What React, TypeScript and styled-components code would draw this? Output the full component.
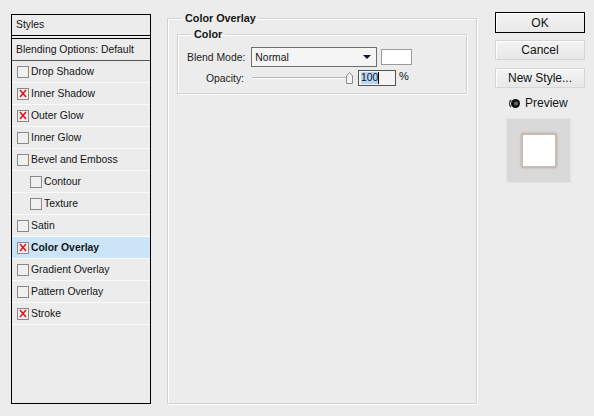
import React from 'react'
import styled, { createGlobalStyle, css } from 'styled-components'

const Global = createGlobalStyle`
  html, body {
    margin: 0;
    padding: 0;
    background: #ececec;
  }
  body {
    font-family: 'Liberation Sans', Arial, sans-serif;
    font-size: 10.4px;
    color: #141414;
  }
`

const Dialog = styled.div`
  display: flex;
  align-items: flex-start;
  width: 594px;
  height: 416px;
  box-sizing: border-box;
  padding: 14px 0 0 11px;
`

const StylesPanel = styled.aside`
  width: 140px;
  height: 390px;
  box-sizing: border-box;
  border: 1px solid #000;
  display: flex;
  flex-direction: column;
`

const PanelHeader = styled.div`
  height: 20px;
  line-height: 20px;
  padding-left: 4px;
  border-bottom: 1px solid #000;
  margin-bottom: 2px;
`

const BlendingRow = styled.div`
  height: 21px;
  line-height: 21px;
  padding-left: 4px;
  border-top: 1px solid #000;
  border-bottom: 1px solid #555;
`

const EffectRow = styled.div<{ $indent?: boolean; $active?: boolean }>(
  props => css`
    display: flex;
    align-items: center;
    gap: 2px;
    height: 21px;
    border-bottom: 1px solid #fafafa;
    padding-left: ${props.$indent ? 18 : 5}px;
    background: ${props.$active ? '#cce4f7' : 'transparent'};
    font-weight: ${props.$active ? 'bold' : 'normal'};
  `
)

const Box = styled.span`
  width: 10px;
  height: 10px;
  border: 1px solid #8a8a8a;
  background: #f0f0f0;
  display: flex;
  align-items: center;
  justify-content: center;
`

const Middle = styled.div`
  margin-left: 16px;
  margin-top: -3px;
`

const Group = styled.fieldset<{ $w: number; $h: number; $top?: number }>(
  props => css`
    width: ${props.$w}px;
    height: ${props.$h}px;
    box-sizing: border-box;
    margin: ${props.$top ?? 0}px 0 0;
    padding: 0 9px;
    border: 1px solid #d2d2d2;
    box-shadow: inset 1px 1px 0 #fff, 1px 1px 0 #fff;
  `
)

const Legend = styled.legend<{ $left: number }>(
  props => css`
    font-weight: bold;
    font-size: 10.8px;
    padding: 0 3px;
    margin-left: ${props.$left}px;
    line-height: 14px;
  `
)

const Inner = styled.div`
  margin-top: 6px;
`

const FieldRow = styled.div<{ $h: number }>(
  props => css`
    display: flex;
    align-items: center;
    height: ${props.$h}px;
  `
)

const Label = styled.span<{ $w: number }>(
  props => css`
    flex: 0 0 ${props.$w}px;
    white-space: nowrap;
    text-align: right;
    color: #222;
  `
)

const Select = styled.div`
  width: 126px;
  height: 20px;
  box-sizing: border-box;
  margin-left: 6px;
  border: 1px solid #6e6e6e;
  background: #f5f5f5;
  display: flex;
  align-items: center;
  justify-content: space-between;
  padding: 0 5px 0 3px;
`

const Swatch = styled.div`
  width: 31px;
  height: 16px;
  box-sizing: border-box;
  margin-left: 4px;
  border: 1px solid #9a9a9a;
  background: #fff;
`

const Slider = styled.div`
  width: 100px;
  height: 14px;
  margin-left: 8px;
  display: flex;
  align-items: center;
  justify-content: flex-end;
  position: relative;
`

const Track = styled.div`
  position: absolute;
  left: 0;
  right: 2px;
  top: 6px;
  height: 1px;
  background: #b8b8b8;
  border-bottom: 1px solid #fff;
`

const Thumb = styled.svg`
  position: relative;
  margin-right: -1px;
`

const NumberField = styled.div`
  width: 38px;
  height: 16px;
  box-sizing: border-box;
  margin-left: 6px;
  border: 1px solid #555;
  background: #f4f4f4;
  display: flex;
  align-items: center;
  padding-left: 2px;
`

const Selected = styled.span`
  background: #b5d7f5;
  line-height: 12px;
`

const Caret = styled.span`
  width: 1px;
  height: 12px;
  background: #000;
`

const Percent = styled.span`
  margin-left: 3px;
  margin-top: -4px;
  font-size: 11px;
`

const Buttons = styled.div`
  margin-left: 18px;
  margin-top: -2px;
  width: 90px;
  display: flex;
  flex-direction: column;
  align-items: stretch;
`

const Button = styled.button<{ $default?: boolean }>(
  props => css`
    font: inherit;
    font-size: 12px;
    color: #111;
    height: ${props.$default ? 21 : 20}px;
    margin-bottom: ${props.$default ? 7 : 8}px;
    padding: 0;
    background: linear-gradient(#f4f4f4, #e8e8e8);
    border: 1px solid ${props.$default ? '#000' : '#d6d6d6'};
    box-shadow: inset 1px 1px 0 #fff;
  `
)

const PreviewLabel = styled.div`
  display: flex;
  align-items: center;
  gap: 5px;
  margin: -1px 0 0 14px;
  font-size: 12px;
  height: 16px;
`

const PreviewBox = styled.div`
  margin: 7px 0 0 11px;
  width: 65px;
  height: 65px;
  box-sizing: border-box;
  background: #d9d9d9;
  border: 1px solid #e4e4e4;
  display: flex;
  align-items: center;
  justify-content: center;
`

const PreviewSquare = styled.div`
  width: 32px;
  height: 31px;
  background: #fff;
  border: 2px solid #c6bcb2;
  border-radius: 3px;
  box-shadow: 0 0 2px #a89888;
`

const Cross = () => (
  <svg width="8" height="9" viewBox="0 0 8 9">
    <path d="M1 1 L7 8 M7 1 L1 8" stroke="#e8141c" strokeWidth="1.6" fill="none" />
  </svg>
)

const effects: { name: string; on?: boolean; indent?: boolean; active?: boolean }[] = [
  { name: 'Drop Shadow' },
  { name: 'Inner Shadow', on: true },
  { name: 'Outer Glow', on: true },
  { name: 'Inner Glow' },
  { name: 'Bevel and Emboss' },
  { name: 'Contour', indent: true },
  { name: 'Texture', indent: true },
  { name: 'Satin' },
  { name: 'Color Overlay', on: true, active: true },
  { name: 'Gradient Overlay' },
  { name: 'Pattern Overlay' },
  { name: 'Stroke', on: true },
]

export default function App() {
  return (
    <>
      <Global />
      <Dialog>
        <StylesPanel>
          <PanelHeader>Styles</PanelHeader>
          <BlendingRow>Blending Options: Default</BlendingRow>
          {effects.map(e => (
            <EffectRow key={e.name} $indent={e.indent} $active={e.active}>
              <Box>{e.on && <Cross />}</Box>
              <span>{e.name}</span>
            </EffectRow>
          ))}
        </StylesPanel>

        <Middle>
          <Group $w={310} $h={393}>
            <Legend $left={5}>Color Overlay</Legend>
            <Group $w={290} $h={67} $top={2}>
              <Legend $left={4}>Color</Legend>
              <Inner>
                <FieldRow $h={20}>
                  <Label $w={57}>Blend Mode:</Label>
                  <Select>
                    <span>Normal</span>
                    <svg width="8" height="4" viewBox="0 0 8 4">
                      <path d="M0 0 H8 L4 4 Z" fill="#14143c" />
                    </svg>
                  </Select>
                  <Swatch />
                </FieldRow>
                <FieldRow $h={22}>
                  <Label $w={57}>Opacity:</Label>
                  <Slider>
                    <Track />
                    <Thumb width="7" height="12" viewBox="0 0 7 12">
                      <path
                        d="M0.5 4 L3.5 0.5 L6.5 4 V11.5 H0.5 Z"
                        fill="#f2f2f2"
                        stroke="#8c8c8c"
                      />
                    </Thumb>
                  </Slider>
                  <NumberField>
                    <Selected>100</Selected>
                    <Caret />
                  </NumberField>
                  <Percent>%</Percent>
                </FieldRow>
              </Inner>
            </Group>
          </Group>
        </Middle>

        <Buttons>
          <Button $default>OK</Button>
          <Button>Cancel</Button>
          <Button>New Style...</Button>
          <PreviewLabel>
            <svg width="11" height="11" viewBox="0 0 11 11">
              <circle cx="6.5" cy="5.5" r="4.5" fill="#111" />
              <path d="M2 2 A5 5 0 0 0 2 9" stroke="#444" strokeWidth="1.5" fill="none" />
              <circle cx="7" cy="5.5" r="2" fill="#666" />
            </svg>
            <span>Preview</span>
          </PreviewLabel>
          <PreviewBox>
            <PreviewSquare />
          </PreviewBox>
        </Buttons>
      </Dialog>
    </>
  )
}
